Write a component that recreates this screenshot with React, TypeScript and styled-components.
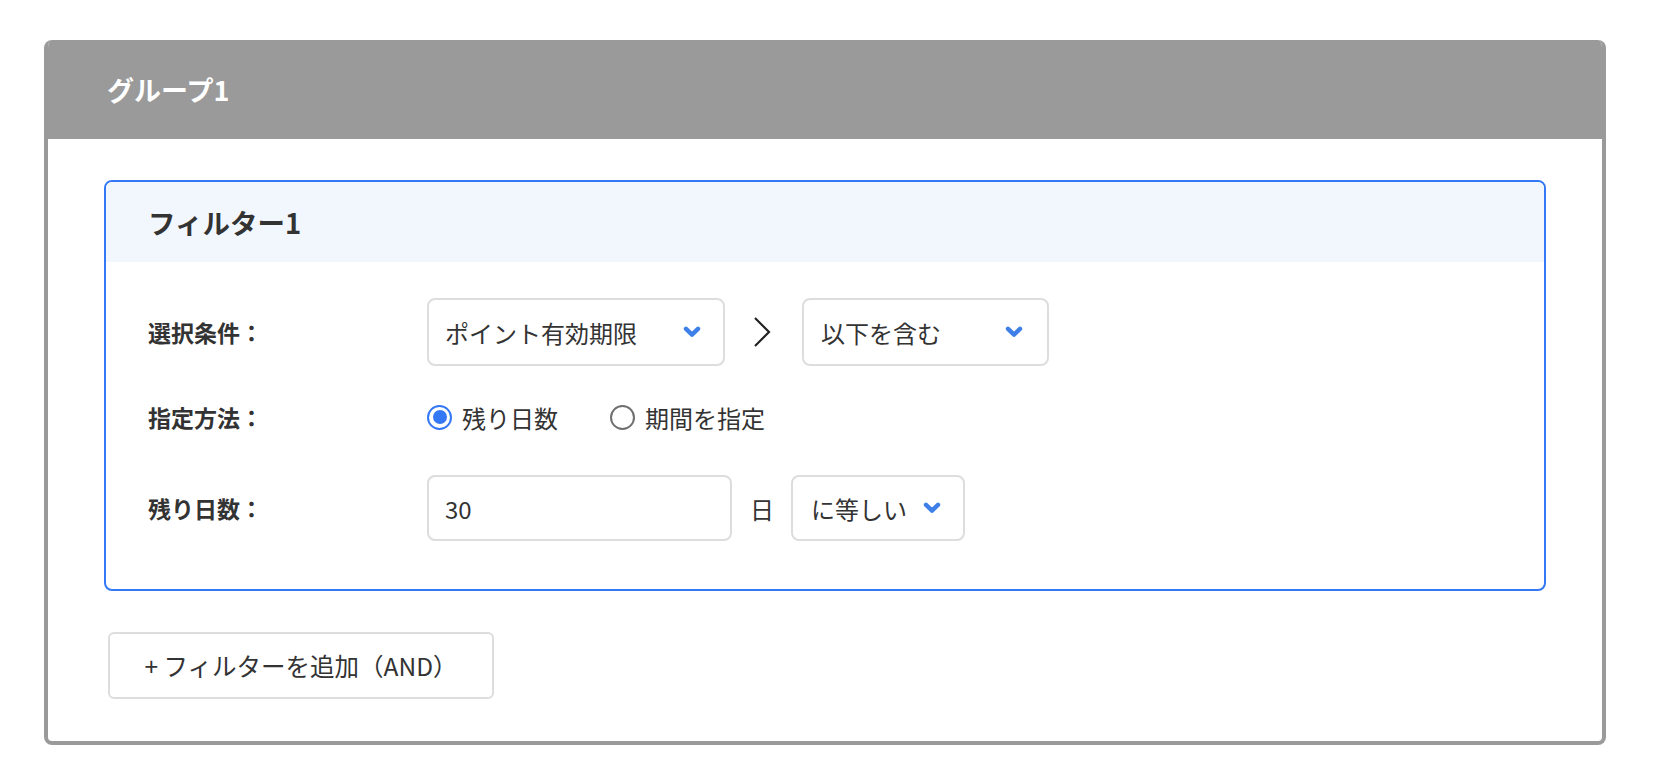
import React from "react";
import styled, { createGlobalStyle } from "styled-components";

const GlobalStyle = createGlobalStyle`
  html, body { margin: 0; padding: 0; background: #ffffff; }
  body {
    font-family: "Noto Sans CJK JP", "Noto Sans", "Liberation Sans", sans-serif;
    color: #333333;
  }
  * { box-sizing: border-box; }
`;

const Page = styled.div`
  padding: 40px 48px 0 44px;
`;

const Group = styled.section`
  border: 4px solid #9a9a9a;
  border-top: none;
  border-radius: 8px;
  overflow: hidden;
  background: #ffffff;
`;

const GroupHeader = styled.header`
  height: 99px;
  background: #9a9a9a;
  display: flex;
  align-items: center;
  padding-left: 63px;
  margin: 0 -4px;
`;

const GroupTitle = styled.h2`
  margin: 0;
  font-size: 27px;
  font-weight: 700;
  color: #ffffff;
  letter-spacing: 0;
`;

const GroupBody = styled.div`
  padding: 41px 56px 42px 56px;
`;

const Filter = styled.div`
  border: 2px solid #3478f6;
  border-radius: 8px;
  overflow: hidden;
`;

const FilterHeader = styled.div`
  height: 80px;
  background: #f2f7fe;
  display: flex;
  align-items: center;
  padding-left: 42px;
`;

const FilterTitle = styled.h3`
  margin: 0;
  font-size: 27.5px;
  font-weight: 700;
  color: #333333;
`;

const FilterBody = styled.div`
  padding: 36px 42px 48px 42px;
  display: flex;
  flex-direction: column;
`;

const Row = styled.div<{ $height: number; $mt?: number }>`
  display: flex;
  align-items: center;
  height: ${(p) => p.$height}px;
  margin-top: ${(p) => p.$mt ?? 0}px;
`;

const Label = styled.div`
  width: 279px;
  flex-shrink: 0;
  font-size: 23px;
  font-weight: 700;
  color: #333333;
`;

const Select = styled.div<{ $width: number; $pl: number; $pr: number }>`
  width: ${(p) => p.$width}px;
  height: 100%;
  border: 2px solid #dddddd;
  border-radius: 8px;
  background: #ffffff;
  display: flex;
  align-items: center;
  padding: 0 ${(p) => p.$pr}px 0 ${(p) => p.$pl}px;
  font-size: 24px;
  color: #333333;
`;

const SelectText = styled.span`
  flex: 1;
  white-space: nowrap;
`;

const Arrow = styled.div`
  width: 77px;
  display: flex;
  justify-content: center;
  padding-right: 4px;
  align-items: center;
`;

const RadioGroup = styled.div`
  display: flex;
  align-items: center;
  gap: 52px;
`;

const RadioOption = styled.label`
  display: flex;
  align-items: center;
  gap: 10px;
  font-size: 24px;
  color: #333333;
`;

const RadioCircle = styled.span<{ $checked?: boolean }>`
  width: 25px;
  height: 25px;
  border-radius: 50%;
  border: ${(p) => (p.$checked ? "2.5px solid #3478f6" : "2px solid #6f6f6f")};
  background: #ffffff;
  display: flex;
  align-items: center;
  justify-content: center;
  &::after {
    content: "";
    display: ${(p) => (p.$checked ? "block" : "none")};
    width: 14px;
    height: 14px;
    border-radius: 50%;
    background: #3478f6;
  }
`;

const TextInput = styled.div`
  width: 305px;
  height: 100%;
  border: 2px solid #dddddd;
  border-radius: 8px;
  display: flex;
  align-items: center;
  padding-left: 16px;
  font-size: 24px;
  color: #333333;
`;

const Unit = styled.span`
  font-size: 24px;
  color: #333333;
  margin: 0 17px 0 18px;
`;

const AddButton = styled.button`
  margin-top: 41px;
  margin-left: 4px;
  width: 386px;
  height: 67px;
  border: 2px solid #dddddd;
  border-radius: 6px;
  background: #ffffff;
  font-family: inherit;
  font-size: 24.5px;
  color: #333333;
  display: flex;
  align-items: center;
  justify-content: center;
  padding: 0;
  cursor: pointer;
`;

const Chevron = () => (
  <svg width="18" height="12" viewBox="0 0 18 12" aria-hidden>
    <polyline
      points="3,2.8 9,8.6 15,2.8"
      fill="none"
      stroke="#3f7fe8"
      strokeWidth="4.4"
      strokeLinecap="round"
      strokeLinejoin="round"
    />
  </svg>
);

const ChevronRight = () => (
  <svg width="20" height="32" viewBox="0 0 20 32" aria-hidden>
    <polyline
      points="3,2 17,16 3,30"
      fill="none"
      stroke="#222222"
      strokeWidth="2.2"
      strokeLinejoin="miter"
    />
  </svg>
);

export default function App() {
  return (
    <>
      <GlobalStyle />
      <Page>
        <Group>
          <GroupHeader>
            <GroupTitle>グループ1</GroupTitle>
          </GroupHeader>
          <GroupBody>
            <Filter>
              <FilterHeader>
                <FilterTitle>フィルター1</FilterTitle>
              </FilterHeader>
              <FilterBody>
                <Row $height={68}>
                  <Label>選択条件：</Label>
                  <Select $width={298} $pl={16} $pr={22}>
                    <SelectText>ポイント有効期限</SelectText>
                    <Chevron />
                  </Select>
                  <Arrow>
                    <ChevronRight />
                  </Arrow>
                  <Select $width={247} $pl={17} $pr={24}>
                    <SelectText>以下を含む</SelectText>
                    <Chevron />
                  </Select>
                </Row>
                <Row $height={32} $mt={35}>
                  <Label>指定方法：</Label>
                  <RadioGroup>
                    <RadioOption>
                      <RadioCircle $checked />
                      残り日数
                    </RadioOption>
                    <RadioOption>
                      <RadioCircle />
                      期間を指定
                    </RadioOption>
                  </RadioGroup>
                </Row>
                <Row $height={66} $mt={42}>
                  <Label>残り日数：</Label>
                  <TextInput>30</TextInput>
                  <Unit>日</Unit>
                  <Select $width={174} $pl={18} $pr={22}>
                    <SelectText>に等しい</SelectText>
                    <Chevron />
                  </Select>
                </Row>
              </FilterBody>
            </Filter>
            <AddButton>+ フィルターを追加（AND）</AddButton>
          </GroupBody>
        </Group>
      </Page>
    </>
  );
}
